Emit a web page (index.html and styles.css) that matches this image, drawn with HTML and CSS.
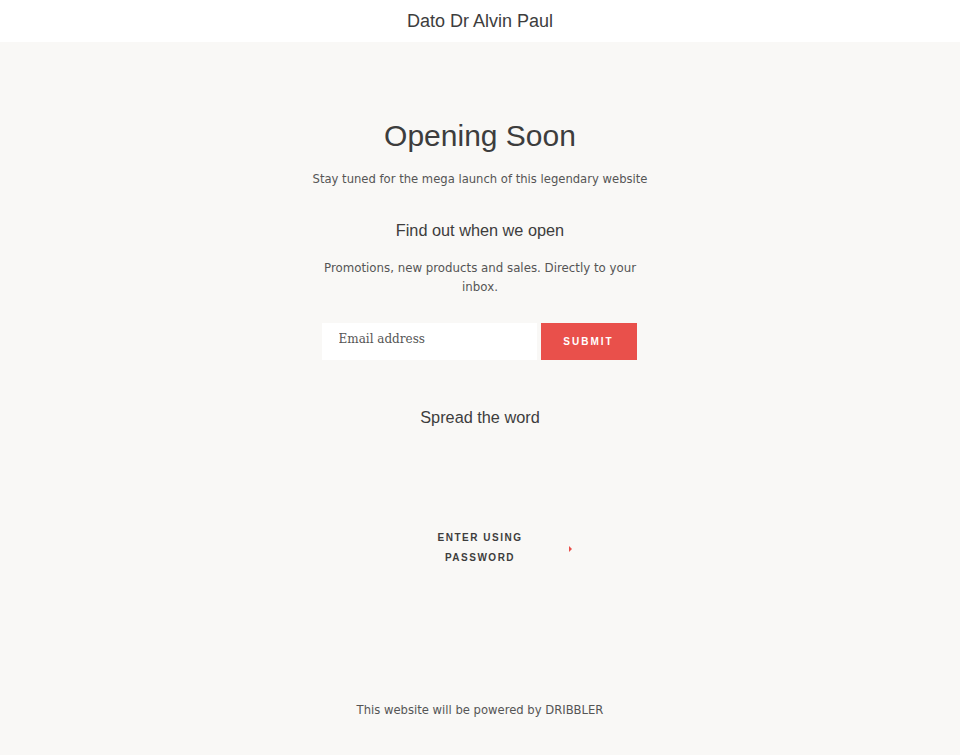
FILE: index.html
```html
<!DOCTYPE html>
<html lang="en">
<head>
  <meta charset="UTF-8" />
  <meta name="viewport" content="width=device-width, initial-scale=1" />
  <title>Dato Dr Alvin Paul - Opening Soon</title>
  <link rel="stylesheet" href="styles.css">
</head>
<body>
  <header class="site-header">
    <h1>Dato Dr Alvin Paul</h1>
  </header>

  <main class="password-main">
    <h2 class="page-title">Opening Soon</h2>
    <p class="lead">Stay tuned for the mega launch of this legendary website</p>

    <h3 class="section-title">Find out when we open</h3>
    <p class="signup-text">Promotions, new products and sales. Directly to your inbox.</p>

    <form class="signup-form" onsubmit="return false;">
      <input type="email" class="email-input" placeholder="Email address">
      <button type="submit" class="btn">Submit</button>
    </form>

    <h3 class="section-title spread">Spread the word</h3>

    <div class="enter-password">
      <a href="#" class="enter-link">Enter using password</a>
      <span class="arrow"></span>
    </div>
  </main>

  <footer class="site-footer">
    <p>This website will be powered by DRIBBLER</p>
  </footer>
</body>
</html>
```

FILE: styles.css
```css
body {
  margin: 0;
  background-color: #f9f8f6;
  color: #3d3d3d;
  font-family: "DejaVu Sans", sans-serif;
  font-size: 12px;
  min-height: 755px;
  display: flex;
  flex-direction: column;
}

.site-header {
  background-color: #fff;
  height: 42px;
  display: flex;
  align-items: center;
  justify-content: center;
}
.site-header h1 {
  margin: 0;
  font-family: "Liberation Sans", Arial, sans-serif;
  font-weight: normal;
  font-size: 18px;
  color: #3d3d3d;
}

.password-main {
  flex: 1;
  display: flex;
  flex-direction: column;
  align-items: center;
  text-align: center;
  padding-top: 75px;
}

.page-title {
  margin: 0;
  font-family: "Liberation Sans", Arial, sans-serif;
  font-weight: normal;
  font-size: 30px;
  line-height: 38px;
  color: #3d3d3d;
}

.lead {
  margin: 14px 0 0;
  font-size: 11.6px;
  line-height: 20px;
  color: #555;
}

.section-title {
  margin: 29px 0 0;
  font-family: "Liberation Sans", Arial, sans-serif;
  font-weight: normal;
  font-size: 16.3px;
  line-height: 24px;
  color: #3d3d3d;
}

.signup-text {
  margin: 17px 0 0;
  max-width: 320px;
  font-size: 11.8px;
  line-height: 19px;
  color: #555;
}

.signup-form {
  display: flex;
  gap: 4px;
  margin-top: 26px;
  margin-right: 2px;
}
.email-input {
  width: 215px;
  height: 37px;
  box-sizing: border-box;
  border: none;
  background: #fff;
  padding: 0 17px 5px;
  font-family: "DejaVu Serif", serif;
  font-size: 12px;
  color: #3d3d3d;
}
.email-input::placeholder {
  color: #555;
}
.btn {
  width: 96px;
  height: 37px;
  border: none;
  background-color: #e9504b;
  color: #fff;
  font-family: "Liberation Sans", Arial, sans-serif;
  font-weight: bold;
  font-size: 10px;
  letter-spacing: 2px;
  text-transform: uppercase;
  cursor: pointer;
}

.spread {
  margin-top: 45px;
}

.enter-password {
  position: relative;
  margin-top: 99px;
  width: 100px;
}
.enter-link {
  display: block;
  color: #3d3d3d;
  text-decoration: none;
  text-transform: uppercase;
  font-family: "Liberation Sans", Arial, sans-serif;
  font-weight: bold;
  font-size: 10px;
  letter-spacing: 1.5px;
  line-height: 20px;
}
.arrow {
  position: absolute;
  left: 139px;
  top: 18px;
  width: 0;
  height: 0;
  border-top: 3px solid transparent;
  border-bottom: 3px solid transparent;
  border-left: 3px solid #e9504b;
}

.site-footer {
  text-align: center;
  padding-bottom: 38px;
}
.site-footer p {
  margin: 0;
  font-size: 11.6px;
  color: #555;
}
```
